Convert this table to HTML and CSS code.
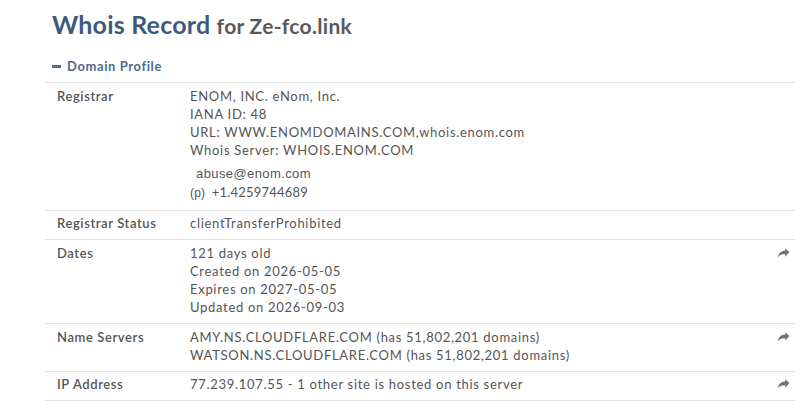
FILE: index.html
```html
<!DOCTYPE html>
<html>
<head>
<meta charset="utf-8">
<link rel="stylesheet" href="styles.css">
</head>
<body>
<div class="page">
  <h1 class="title">Whois Record <span class="sub">for Ze-fco.link</span></h1>
  <div class="section-head"><span class="minus"></span>Domain Profile</div>
  <div class="table">
    <div class="row">
      <div class="label">Registrar</div>
      <div class="value">
        <div>ENOM, INC. eNom, Inc.</div>
        <div>IANA ID: 48</div>
        <div>URL: WWW.ENOMDOMAINS.COM,whois.enom.com</div>
        <div>Whois Server: WHOIS.ENOM.COM</div>
        <div class="contact">
          <div class="email">abuse@enom.com</div>
          <div class="phone"><span class="p">(p)</span> +1.4259744689</div>
        </div>
      </div>
      <div class="act"></div>
    </div>
    <div class="row single">
      <div class="label">Registrar Status</div>
      <div class="value">clientTransferProhibited</div>
      <div class="act"></div>
    </div>
    <div class="row">
      <div class="label">Dates</div>
      <div class="value">
        <div>121 days old</div>
        <div>Created on 2026-05-05</div>
        <div>Expires on 2027-05-05</div>
        <div>Updated on 2026-09-03</div>
      </div>
      <div class="act"><svg class="share" viewBox="0 0 16 14"><path d="M15.5 5.2 10.2 0.3v2.9C5 3.5 1.5 6.3 0.6 12.2c1.9-3 4.9-4.3 9.6-4.1v3z"/></svg></div>
    </div>
    <div class="row">
      <div class="label">Name Servers</div>
      <div class="value">
        <div>AMY.NS.CLOUDFLARE.COM (has 51,802,201 domains)</div>
        <div>WATSON.NS.CLOUDFLARE.COM (has 51,802,201 domains)</div>
      </div>
      <div class="act"><svg class="share" viewBox="0 0 16 14"><path d="M15.5 5.2 10.2 0.3v2.9C5 3.5 1.5 6.3 0.6 12.2c1.9-3 4.9-4.3 9.6-4.1v3z"/></svg></div>
    </div>
    <div class="row single">
      <div class="label">IP Address</div>
      <div class="value">77.239.107.55 - 1 other site is hosted on this server</div>
      <div class="act"><svg class="share" viewBox="0 0 16 14"><path d="M15.5 5.2 10.2 0.3v2.9C5 3.5 1.5 6.3 0.6 12.2c1.9-3 4.9-4.3 9.6-4.1v3z"/></svg></div>
    </div>
  </div>
</div>
</body>
</html>
```
FILE: styles.css
```css
html, body {
  margin: 0;
  padding: 0;
  background: #fff;
}
body {
  font-family: Lato, "Open Sans", sans-serif;
  color: #555;
}
.page {
  padding: 8px 5px 0 45px;
}
.title {
  margin: 0 0 0 7px;
  font-size: 25px;
  font-weight: 700;
  color: #3e5a7a;
  line-height: 32px;
  letter-spacing: 0.2px;
}
.title .sub {
  font-size: 21px;
  color: #595959;
  letter-spacing: 0.3px;
}
.section-head {
  margin: 16px 0 0 7px;
  font-size: 13px;
  font-weight: 700;
  color: #4f6b88;
  display: flex;
  align-items: center;
  height: 16px;
  padding-bottom: 8px;
  letter-spacing: 0.6px;
}
.minus {
  display: inline-block;
  width: 9px;
  height: 3px;
  background: #5a6f86;
  margin-right: 6px;
}
.table {
  border-top: 1px solid #e3e3e3;
}
.row {
  display: flex;
  border-bottom: 1px solid #e3e3e3;
  padding: 4px 0 7px;
  font-size: 13px;
  line-height: 18px;
  letter-spacing: 0.7px;
}
.row.single {
  padding: 3px 0 7px;
}
.label {
  width: 133px;
  padding-left: 12px;
  font-weight: 600;
  color: #555;
  letter-spacing: 0.6px;
}
.value {
  flex: 1;
  color: #555;
}
.contact {
  margin-top: 5px;
}
.email {
  font-family: "Liberation Sans", Arial, sans-serif;
  font-size: 13px;
  line-height: 19px;
  padding-left: 6px;
  color: #555;
  letter-spacing: 0.4px;
}
.phone {
  font-size: 13px;
  line-height: 19px;
  letter-spacing: 0.2px;
}
.phone .p {
  font-family: "Liberation Sans", Arial, sans-serif;
  font-size: 12px;
  margin-right: 3px;
}
.act {
  width: 28px;
  display: flex;
  justify-content: flex-end;
  padding-top: 4px;
  padding-right: 5px;
  box-sizing: border-box;
}
.share {
  width: 13px;
  height: 11px;
  fill: #727272;
}
```
